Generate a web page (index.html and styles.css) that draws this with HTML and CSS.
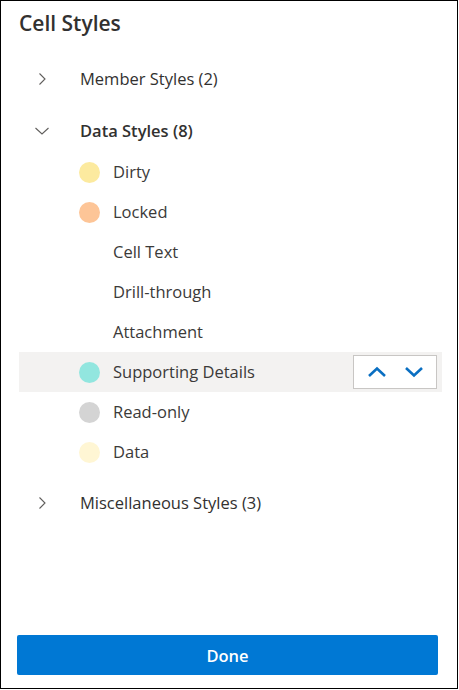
FILE: index.html
```html
<!DOCTYPE html>
<html lang="en">
<head>
<meta charset="utf-8">
<title>Cell Styles</title>
<link rel="stylesheet" href="styles.css">
</head>
<body>
<div class="panel">
  <h1 class="title">Cell Styles</h1>
  <div class="tree">
    <div class="section first">
      <div class="header">
        <span class="chev"><svg width="14" height="14" viewBox="0 0 14 14"><path d="M4.5 1.5 L10 7 L4.5 12.5" fill="none" stroke="#605e5c" stroke-width="1.1"/></svg></span>
        <span class="label">Member Styles (2)</span>
      </div>
    </div>
    <div class="section second">
      <div class="header open">
        <span class="chev"><svg width="14" height="14" viewBox="0 0 14 14"><path d="M0.5 4 L7 10 L13.5 4" fill="none" stroke="#605e5c" stroke-width="1.1"/></svg></span>
        <span class="label">Data Styles (8)</span>
      </div>
      <ul class="items">
        <li class="item"><span class="dot dirty"></span><span class="text">Dirty</span></li>
        <li class="item"><span class="dot locked"></span><span class="text">Locked</span></li>
        <li class="item"><span class="dot none"></span><span class="text">Cell Text</span></li>
        <li class="item"><span class="dot none"></span><span class="text">Drill-through</span></li>
        <li class="item"><span class="dot none"></span><span class="text">Attachment</span></li>
        <li class="item selected"><span class="dot supporting"></span><span class="text">Supporting Details</span>
          <span class="movers">
            <button class="mover" aria-label="Move up"><svg width="20" height="12" viewBox="0 0 20 12"><path d="M2 10 L10 2.5 L18 10" fill="none" stroke="#0a6fc2" stroke-width="2.6"/></svg></button>
            <button class="mover" aria-label="Move down"><svg width="20" height="12" viewBox="0 0 20 12"><path d="M2 2 L10 9.5 L18 2" fill="none" stroke="#0a6fc2" stroke-width="2.6"/></svg></button>
          </span>
        </li>
        <li class="item"><span class="dot readonly"></span><span class="text">Read-only</span></li>
        <li class="item"><span class="dot data"></span><span class="text">Data</span></li>
      </ul>
    </div>
    <div class="section">
      <div class="header">
        <span class="chev"><svg width="14" height="14" viewBox="0 0 14 14"><path d="M4.5 1.5 L10 7 L4.5 12.5" fill="none" stroke="#605e5c" stroke-width="1.1"/></svg></span>
        <span class="label">Miscellaneous Styles (3)</span>
      </div>
    </div>
  </div>
  <div class="footer">
    <button class="done">Done</button>
  </div>
</div>
</body>
</html>
```
FILE: styles.css
```css
* { box-sizing: border-box; }
html, body { margin: 0; padding: 0; background: #fff; }
body {
  font-family: "Open Sans", "Noto Sans", "Liberation Sans", sans-serif;
  color: #323130;
}
.panel {
  width: 458px;
  height: 689px;
  border: 1px solid #000;
  display: flex;
  flex-direction: column;
}
.title {
  margin: 8px 0 0 18px;
  font-size: 21px;
  line-height: 28px;
  font-weight: 600;
  color: #323130;
}
.tree {
  margin: 22px 15px 0 18px;
  display: flex;
  flex-direction: column;
}
.section.first { margin-bottom: 12px; }
.section.second { margin-bottom: 11px; }
.header {
  height: 40px;
  display: flex;
  align-items: center;
}
.chev {
  width: 61px;
  padding-left: 16px;
  display: flex;
  align-items: center;
}
.chev svg { display: block; }
.label {
  font-size: 16.5px;
  line-height: 22px;
  color: #323130;
}
.header.open .label { font-weight: 600; }
.items {
  list-style: none;
  margin: 1px 0 0 0;
  padding: 0;
}
.item {
  height: 40px;
  display: flex;
  align-items: center;
  padding-left: 60px;
}
.item.selected { background: #f3f2f1; }
.dot {
  width: 21px;
  height: 21px;
  border-radius: 50%;
  flex: none;
  margin-right: 13px;
}
.dot.none { background: transparent; }
.dot.dirty { background: #fcea9f; }
.dot.locked { background: #fdc597; }
.dot.supporting { background: #92e6df; }
.dot.readonly { background: #d4d4d4; }
.dot.data { background: #fff6d4; }
.text {
  font-size: 16.5px;
  line-height: 22px;
  color: #3b3a39;
}
.movers {
  margin-left: auto;
  margin-right: 5px;
  width: 84px;
  height: 34px;
  border: 1px solid #c8c6c4;
  background: #fff;
  display: flex;
  align-items: center;
  justify-content: space-around;
  padding: 0 4px;
}
.mover {
  border: 0;
  background: transparent;
  padding: 0;
  width: 30px;
  height: 30px;
  display: flex;
  align-items: center;
  justify-content: center;
  cursor: pointer;
}
.mover svg { display: block; }
.footer {
  margin-top: auto;
  padding: 0 19px 13px 16px;
}
.done {
  width: 100%;
  height: 40px;
  border: 0;
  border-radius: 2px;
  background: #0078d4;
  color: #fff;
  font-family: "Open Sans", "Noto Sans", "Liberation Sans", sans-serif;
  font-size: 16.5px;
  font-weight: 600;
  cursor: pointer;
}
```
